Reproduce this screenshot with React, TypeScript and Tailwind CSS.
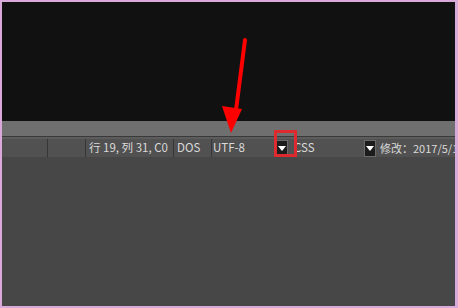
import React from "react";

const font = { fontFamily: '"Noto Sans CJK SC", "Microsoft YaHei", "Liberation Sans", sans-serif' };

function DropBtn() {
  return (
    <div className="w-[12px] h-[17px] bg-[#1c1c1c] border border-[#6a6a6a] flex items-center justify-center shrink-0">
      <svg width="8" height="5" viewBox="0 0 8 5">
        <polygon points="0,0 8,0 4,5" fill="#ffffff" />
      </svg>
    </div>
  );
}

export default function App() {
  return (
    <div className="relative w-[458px] h-[308px] bg-[#d9a9d9] pt-[2px] pl-[2px] pr-[3px] pb-[2px]" style={font}>
      <div className="flex flex-col w-full h-full bg-[#474747]">
        <div className="h-[119px] bg-[#111111]" />
        <div className="h-[15px] bg-[#6f6f6f]" />
        <div className="h-px bg-[#3a3a3a]" />
        <div className="h-[2px] bg-[#5c5c5c]" />
        <div className="h-[18px] bg-[#515151] flex items-center text-[11.5px] leading-none text-[#dadada] whitespace-nowrap overflow-hidden">
          <div className="w-[46px] shrink-0 h-full border-r border-[#363636]" />
          <div className="w-[38px] shrink-0 h-full border-r border-[#363636]" />
          <div className="w-[88px] shrink-0 h-full border-r border-[#363636] flex items-center pl-[3px]">行 19, 列 31, C0</div>
          <div className="w-[38px] shrink-0 h-full border-r border-[#363636] flex items-center pl-[3px]">DOS</div>
          <div className="w-[64px] shrink-0 h-full flex items-center pl-[1px]">UTF-8</div>
          <DropBtn />
          <div className="w-[76px] shrink-0 h-full flex items-center pl-[6px]">CSS</div>
          <DropBtn />
          <div className="shrink-0 h-full flex items-center pl-[4px] text-[11px]">修改：2017/5/1</div>
        </div>
        <div className="flex-1 bg-[#474747]" />
      </div>
      <div className="absolute left-[274px] top-[130px] w-[23px] h-[27px] border-[3px] border-[#dd2a2e]" />
      <svg className="absolute left-0 top-0" width="458" height="308" viewBox="0 0 458 308">
        <line x1="245" y1="40" x2="236" y2="110" stroke="#ff0000" strokeWidth="4" strokeLinecap="round" />
        <polygon points="222,106 242,109 231,133" fill="#ff0000" />
      </svg>
    </div>
  );
}
